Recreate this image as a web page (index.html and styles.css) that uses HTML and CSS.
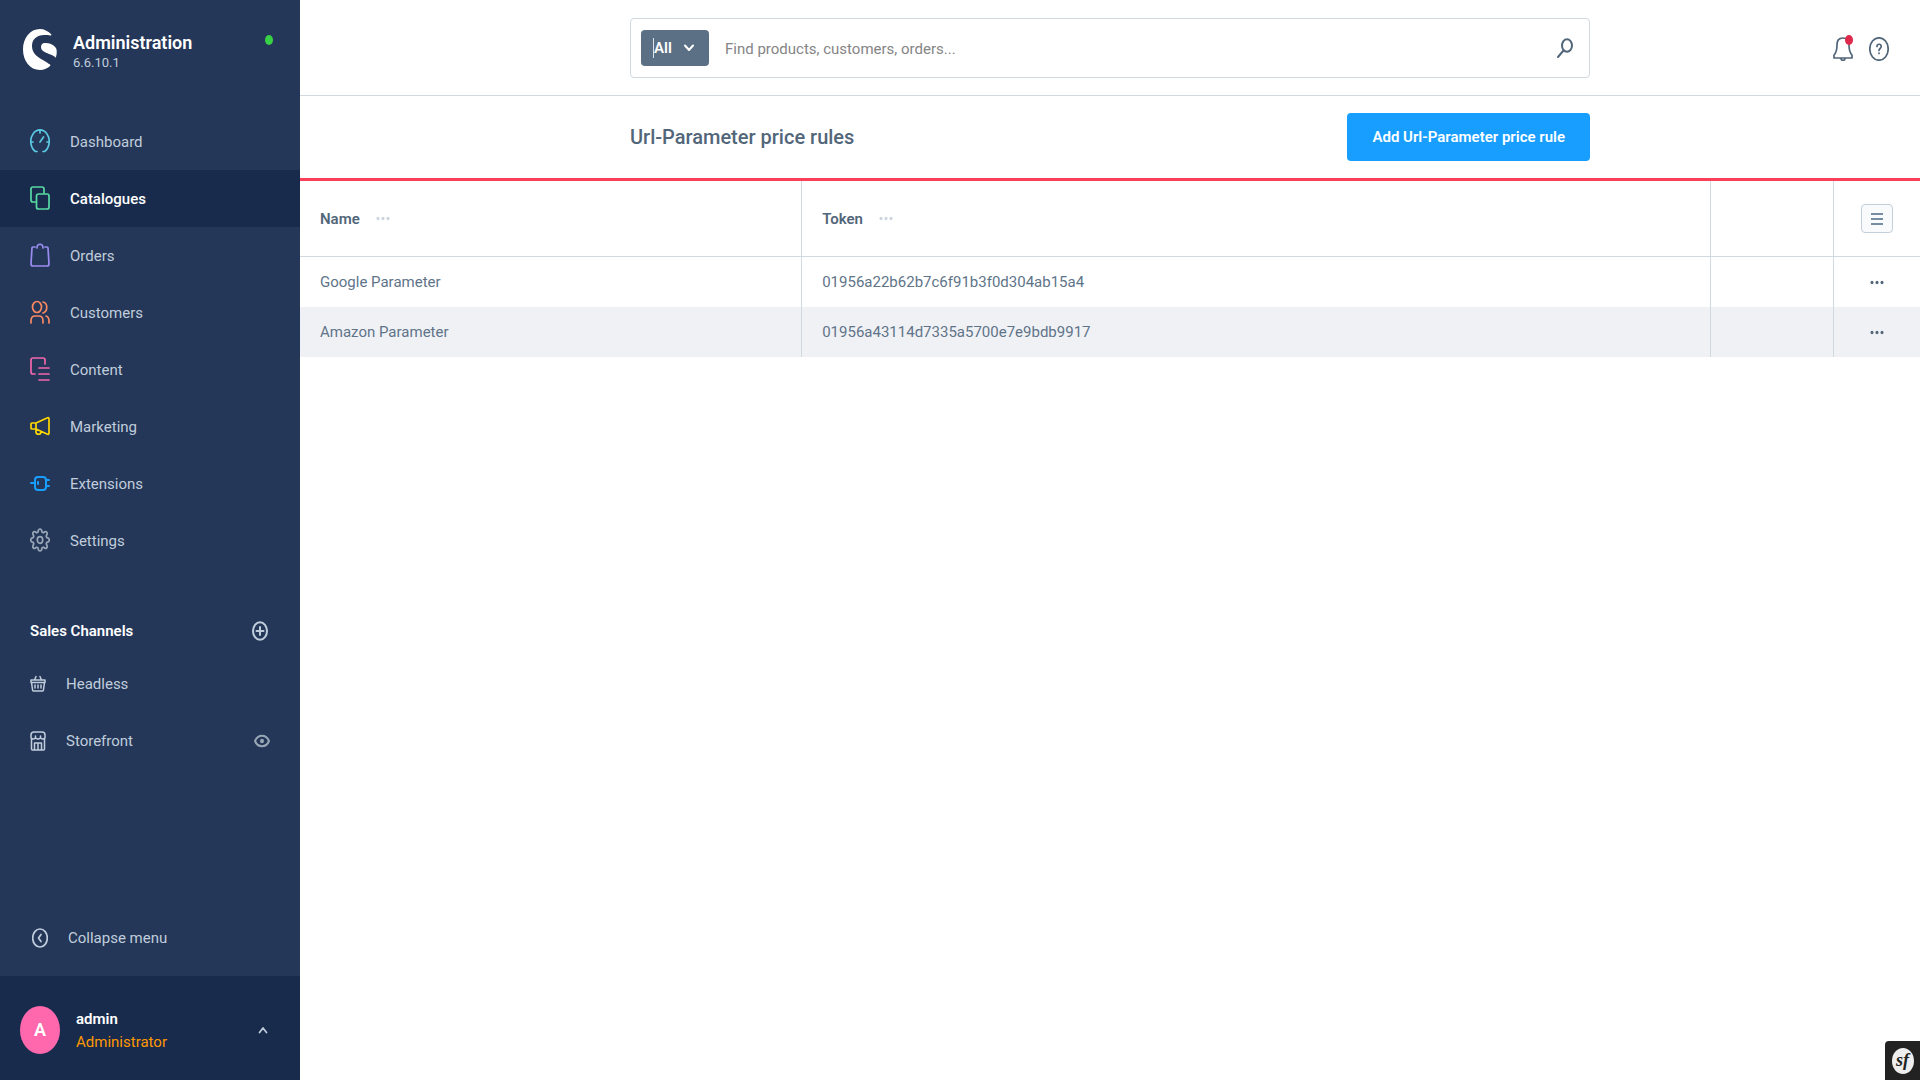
FILE: index.html
```html
<!DOCTYPE html>
<html lang="en">
<head>
<meta charset="utf-8">
<meta name="viewport" content="width=device-width, initial-scale=1">
<title>Url-Parameter price rules | Administration</title>
<link rel="stylesheet" href="styles.css">
</head>
<body>
<div class="app">
  <aside class="sidebar">
    <header class="brand">
      <svg class="brand-logo" viewBox="0 0 34 41" aria-hidden="true">
        <path fill="#fff" d="M28 5C25 2 21 0 17 0 7 0 0 9 0 20.500S7 41 17 41c4 0 8-2 10-4 1-1 0-2-1-2-2-2-5-3-8-5-5-3-9-7-9-13C9 10 14 6 21 6c3 0 5 0 6 .5 1 0 2-.5 1-1.500z"/>
        <path fill="#fff" d="M33 28c1-3 1-7 0-9-3-4-7-5-11-5-3 0-4 2-4 4 0 4 4 5 8 7 3 1 5 2 6 3q1 1 1 0z"/>
      </svg>
      <div class="brand-text">
        <strong class="brand-name">Administration</strong>
        <span class="brand-version">6.6.10.1</span>
      </div>
      <span class="status-dot"></span>
    </header>

    <nav class="nav" aria-label="Main">
      <a class="nav-item" href="#dashboard">
        <svg class="icon nav-icon dashboard" viewBox="0 0 20 24"><path d="M7 22.500H5.500A9.200 11.500 0 1 1 14.500 22.500H13M10 1v3M1 13h2M17 13h2M10 13l3.500-5"/></svg>
        <span>Dashboard</span></a>
      <a class="nav-item active" href="#catalogues" aria-current="page">
        <svg class="icon nav-icon catalogues" viewBox="0 0 20 24"><path d="M6 16H3q-2 0-2-2V3q0-2 2-2h9q2 0 2 2v4"/><rect x="6.500" y="8" width="12.500" height="15" rx="2"/></svg>
        <span>Catalogues</span></a>
      <a class="nav-item" href="#orders">
        <svg class="icon nav-icon orders" viewBox="0 0 20 24"><path d="M5 4H3Q2 4 2 5L1 21q0 2 2 2h14q2 0 2-2L18 5q0-1-1-1h-2M7 5c0-5 6-5 6 0"/></svg>
        <span>Orders</span></a>
      <a class="nav-item" href="#customers">
        <svg class="icon nav-icon customers" viewBox="0 0 20 24"><ellipse cx="7" cy="7" rx="4.500" ry="5.500"/><path d="M1 23v-2q0-5 4-5h4q4 0 4 5v2M13 2c5 1 5 9 0 11M16 16q3 1 3 5v2"/></svg>
        <span>Customers</span></a>
      <a class="nav-item" href="#content">
        <svg class="icon nav-icon content" viewBox="0 0 20 24"><path d="M5 17H3q-2 0-2-2V3q0-2 2-2h10q2 0 2 2v4M9 11h10M9 17h10M9 23h10"/></svg>
        <span>Content</span></a>
      <a class="nav-item" href="#marketing">
        <svg class="icon nav-icon marketing" viewBox="0 0 20 24"><path d="M6 9l11-5q2-1 2 1v14q0 2-2 1L6 15zM6 9H2q-1 0-1 1v4q0 1 1 1h4M6 15v3c0 3 5 3 5 0"/></svg>
        <span>Marketing</span></a>
      <a class="nav-item" href="#extensions">
        <svg class="icon nav-icon extensions" viewBox="0 0 20 24"><path d="M1 12h4M16 9h3M16 15h3M8 11v2"/><rect x="5" y="6" width="11" height="13" rx="3"/></svg>
        <span>Extensions</span></a>
      <a class="nav-item" href="#settings">
        <svg class="icon nav-icon settings" viewBox="0 0 20 24"><ellipse cx="10" cy="12" rx="2.700" ry="3.300"/><path d="M8.500 2q1.500-2 3 0l.6 2.200 1.300.6 2-1.300q1.800 0 1.800 2.300l-1 2.300.6 1.500 1.800.7q1.200 1.700 0 3.400l-1.800.7-.6 1.500 1 2.300q0 2.300-1.800 2.300l-2-1.300-1.300.6-.6 2.200q-1.500 2-3 0l-.6-2.200-1.300-.6-2 1.300q-1.800 0-1.800-2.300l1-2.300-.6-1.500-1.800-.7q-1.200-1.700 0-3.400l1.800-.7.6-1.500-1-2.300q0-2.300 1.800-2.300l2 1.300 1.300-.6z"/></svg>
        <span>Settings</span></a>
    </nav>

    <section class="channels">
      <div class="channels-head">
        <h2 class="channels-title">Sales Channels</h2>
        <button class="icon-button" type="button" aria-label="Add sales channel">
          <svg class="icon plus-icon" viewBox="0 0 16 20"><ellipse cx="8" cy="10" rx="7" ry="8.800"/><path d="M8 6v8M4.500 10h7"/></svg>
        </button>
      </div>
      <div class="channel">
        <a class="channel-link" href="#headless">
          <svg class="icon small-icon" viewBox="0 0 16 20"><path d="M1 6h14v2.500H1zM1.500 8.500l1 7q0 1.500 1 1.500h9q1 0 1-1.500l1-7M4.500 6L6 2.500M11.500 6L10 2.500M5 11v3M8 11v3M11 11v3"/></svg>
          <span>Headless</span></a>
      </div>
      <div class="channel">
        <a class="channel-link" href="#storefront">
          <svg class="icon small-icon" viewBox="0 0 16 20"><path d="M1.500 8v10q0 1 1 1h11q1 0 1-1V8M1 4q0-3 3-3h8q3 0 3 3v3q-2 2-4.500 0Q8 9 5.500 7 3 9 1 7zM4.500 19v-7h7v7M8 12v7M5.500 5v2M10.500 5v2"/></svg>
          <span>Storefront</span></a>
        <button class="icon-button" type="button" aria-label="Open storefront">
          <svg class="icon eye-icon" viewBox="0 0 16 14"><path d="M1 7C4 0 12 0 15 7 12 14 4 14 1 7z"/><ellipse cx="8" cy="7" rx="1" ry="1.300"/></svg>
        </button>
      </div>
    </section>

    <button class="collapse" type="button">
      <svg class="icon collapse-icon" viewBox="0 0 16 20"><ellipse cx="8" cy="10" rx="7.300" ry="9"/><path d="M9 6.500L6.500 10 9 13.500"/></svg>
      <span>Collapse menu</span>
    </button>

    <button class="user" type="button">
      <span class="avatar">A</span>
      <span class="user-text">
        <strong class="user-name">admin</strong>
        <span class="user-role">Administrator</span>
      </span>
      <svg class="icon user-chevron" viewBox="0 0 10 8"><path d="M1.500 6.500l3.500-4.500 3.500 4.500"/></svg>
    </button>
  </aside>

  <main class="main">
    <header class="topbar">
      <form class="search" role="search">
        <button class="search-type" type="button"><span class="caret"></span><span>All</span>
          <svg class="icon type-chevron" viewBox="0 0 10 8"><path d="M1 1.500l4 4.500 4-4.500"/></svg>
        </button>
        <input class="search-input" type="text" aria-label="Search" placeholder="Find products, customers, orders...">
        <button class="icon-button" type="submit" aria-label="Search">
          <svg class="icon search-icon" viewBox="0 0 16 20"><ellipse cx="10" cy="7.500" rx="5" ry="6.300"/><path d="M6.500 12.500L1 19"/></svg>
        </button>
      </form>
      <div class="top-actions">
        <button class="icon-button bell" type="button" aria-label="Notifications">
          <svg class="icon top-icon" viewBox="0 0 20 24"><path d="M10 1C5 1 4 4 4 8c0 5-1 8-3 10v3h18v-3c-2-2-3-5-3-10 0-4-1-7-6-7zM8 21.500c0 2.500 4 2.500 4 0"/></svg>
          <span class="bell-dot"></span>
        </button>
        <button class="icon-button" type="button" aria-label="Help">
          <svg class="icon top-icon" viewBox="0 0 20 24"><ellipse cx="10" cy="12" rx="9.200" ry="11.200"/><path d="M8 9.500c0-3 4.200-3 4.200 0 0 2-2.200 2-2.200 4M10 16v.5"/></svg>
        </button>
      </div>
    </header>

    <section class="page-head">
      <div class="page-head-inner">
        <h1 class="page-title">Url-Parameter price rules</h1>
        <button class="primary" type="button">Add Url-Parameter price rule</button>
      </div>
    </section>

    <table class="grid">
      <colgroup><col class="col-name"><col><col class="col-empty"><col class="col-actions"></colgroup>
      <thead>
        <tr>
          <th scope="col"><div class="head-cell">Name
            <button class="icon-button" type="button" aria-label="Name column options"><svg class="dots head-dots" viewBox="0 0 14 5"><ellipse cx="2" cy="2.500" rx="1.500" ry="1.800"/><ellipse cx="7" cy="2.500" rx="1.500" ry="1.800"/><ellipse cx="12" cy="2.500" rx="1.500" ry="1.800"/></svg></button></div></th>
          <th scope="col"><div class="head-cell">Token
            <button class="icon-button" type="button" aria-label="Token column options"><svg class="dots head-dots" viewBox="0 0 14 5"><ellipse cx="2" cy="2.500" rx="1.500" ry="1.800"/><ellipse cx="7" cy="2.500" rx="1.500" ry="1.800"/><ellipse cx="12" cy="2.500" rx="1.500" ry="1.800"/></svg></button></div></th>
          <td></td>
          <td class="actions"><button class="list-button" type="button" aria-label="List settings"><svg class="icon list-icon" viewBox="0 0 12 12"><path d="M0 1h12M0 6h12M0 11h12"/></svg></button></td>
        </tr>
      </thead>
      <tbody>
        <tr>
          <td>Google Parameter</td><td>01956a22b62b7c6f91b3f0d304ab15a4</td><td></td>
          <td class="actions"><button class="icon-button" type="button" aria-label="Google Parameter actions"><svg class="dots" viewBox="0 0 14 5"><ellipse cx="2" cy="2.500" rx="1.500" ry="1.800"/><ellipse cx="7" cy="2.500" rx="1.500" ry="1.800"/><ellipse cx="12" cy="2.500" rx="1.500" ry="1.800"/></svg></button></td>
        </tr>
        <tr>
          <td>Amazon Parameter</td><td>01956a43114d7335a5700e7e9bdb9917</td><td></td>
          <td class="actions"><button class="icon-button" type="button" aria-label="Amazon Parameter actions"><svg class="dots" viewBox="0 0 14 5"><ellipse cx="2" cy="2.500" rx="1.500" ry="1.800"/><ellipse cx="7" cy="2.500" rx="1.500" ry="1.800"/><ellipse cx="12" cy="2.500" rx="1.500" ry="1.800"/></svg></button></td>
        </tr>
      </tbody>
    </table>
  </main>

  <button class="toolbar-toggle" type="button" aria-label="Open toolbar"><span class="toolbar-badge">sf</span></button>
</div>
</body>
</html>
```
FILE: styles.css
```css
* { box-sizing: border-box; }

body {
  margin: 0;
  background: #fff;
  color: #607489;
  font: 15px/20px Roboto, "Liberation Sans", sans-serif;
}

button, input { font: inherit; color: inherit; }

button {
  padding: 0;
  border: 0;
  background: none;
  cursor: pointer;
}

a { color: inherit; text-decoration: none; }

.app {
  display: grid;
  grid-template-columns: 300px minmax(0, 1fr);
  min-height: 100vh;
}

.icon {
  flex: none;
  fill: none;
  stroke: currentColor;
  stroke-width: 1.7;
  stroke-linecap: round;
  stroke-linejoin: round;
}

.icon-button { display: flex; align-items: center; }

/* Sidebar */
.sidebar {
  position: sticky;
  top: 0;
  display: flex;
  flex-direction: column;
  height: 100vh;
  background: #243758;
  color: #c0cddc;
}

.brand {
  display: flex;
  gap: 16px;
  height: 113px;
  padding: 29px 27px 0 23px;
}

.brand-logo { width: 34px; height: 41px; }

.brand-text {
  display: flex;
  flex: 1;
  flex-direction: column;
  padding-top: 4px;
}

.brand-name {
  color: #fff;
  font-size: 18px;
  font-weight: 600;
}

.brand-version { font-size: 13px; }

.status-dot {
  width: 8px;
  height: 10px;
  margin-top: 6px;
  border-radius: 50%;
  background: #37d046;
}

.nav-item {
  display: flex;
  align-items: center;
  gap: 20px;
  height: 57px;
  padding: 0 30px;
}

.nav-item.active {
  background: #182b4d;
  color: #fff;
  font-weight: 500;
}

.nav-icon { width: 20px; height: 24px; margin-bottom: 2px; }
.dashboard { color: #5ac8e2; }
.catalogues { color: #57d9a3; }
.orders { color: #9a8cf0; }
.customers { color: #f88962; }
.content { color: #f266ad; }
.marketing { color: #ffd700; }
.extensions { color: #189eff; stroke-width: 2; }
.settings { color: #98a7b5; }

.channels { padding: 30px 30px 0; }

.channels-head, .channel {
  display: flex;
  align-items: center;
  justify-content: space-between;
}

.channels-head { height: 56px; padding-top: 8px; }
.channel { height: 57px; }

.channels-title {
  margin: 0;
  color: #fff;
  font-size: 15px;
  font-weight: 600;
}

.channel-link { display: flex; align-items: center; gap: 20px; }
.plus-icon, .small-icon, .collapse-icon { width: 16px; height: 20px; }
.plus-icon { margin-right: 2px; stroke-width: 2; }
.small-icon { stroke-width: 1.5; }
.eye-icon { width: 16px; height: 14px; color: #98a7b5; stroke-width: 2; }

.collapse {
  display: flex;
  align-items: center;
  gap: 20px;
  margin-top: auto;
  padding: 28px 32px;
}

.user {
  display: flex;
  align-items: center;
  gap: 16px;
  height: 104px;
  padding: 4px 32px 0 20px;
  background: #182b4d;
  text-align: left;
}

.avatar {
  display: grid;
  place-items: center;
  width: 40px;
  height: 48px;
  border-radius: 50%;
  background: #ff68ac;
  color: #fff;
  font-size: 18px;
  font-weight: 600;
}

.user-text { display: flex; flex: 1; flex-direction: column; gap: 3px; }
.user-name { color: #fff; font-weight: 600; }
.user-role { color: #ff9800; }
.user-chevron, .type-chevron { width: 10px; height: 8px; }

/* Top bar */
.topbar {
  display: grid;
  grid-template-columns: 1fr minmax(0, 960px) 1fr;
  align-items: center;
  height: 96px;
  border-bottom: 1px solid #d1d9e0;
  color: #52667a;
}

.search {
  display: flex;
  grid-column: 2;
  align-items: center;
  gap: 16px;
  height: 60px;
  padding: 0 16px 0 10px;
  border: 1px solid #d1d9e0;
  border-radius: 4px;
}

.search-type {
  display: flex;
  align-items: center;
  width: 68px;
  height: 36px;
  padding: 0 15px 0 12px;
  border-radius: 4px;
  background: #5c7085;
  color: #fff;
  font-weight: 600;
}

.caret { width: 1px; height: 20px; background: #dbe2ea; }
.type-chevron { margin-left: auto; stroke-width: 2; }

.search-input {
  flex: 1;
  min-width: 0;
  padding: 2px 0 0;
  border: 0;
  outline: 0;
  background: none;
}

.search-input::placeholder { color: #858585; opacity: 1; }
.search-icon { width: 16px; height: 20px; stroke-width: 2; }

.top-actions {
  display: flex;
  gap: 16px;
  justify-self: end;
  padding: 2px 31px 0 0;
}

.top-icon { width: 20px; height: 24px; }
.bell { position: relative; }

.bell-dot {
  position: absolute;
  top: -2px;
  right: 0;
  width: 8px;
  height: 10px;
  border-radius: 50%;
  background: #de294c;
}

/* Page header */
.page-head {
  display: grid;
  grid-template-columns: minmax(0, 960px);
  justify-content: center;
  height: 85px;
  border-bottom: 3px solid #f93f5a;
}

.page-head-inner {
  display: flex;
  align-items: center;
  justify-content: space-between;
}

.page-title {
  margin: 0;
  color: #52667a;
  font-size: 20px;
  font-weight: 500;
  line-height: 24px;
}

.primary {
  height: 48px;
  padding: 0 25px;
  border-radius: 4px;
  background: #189eff;
  color: #fff;
  font-weight: 600;
}

/* Data grid */
.grid {
  width: 100%;
  border-collapse: separate;
  border-spacing: 0;
  table-layout: fixed;
}

.col-name { width: 31%; }
.col-empty { width: 123px; }
.col-actions { width: 86px; }

.grid th, .grid td {
  height: 50px;
  padding: 0 20px;
  border-right: 1px solid #d1d9e0;
  text-align: left;
}

.grid th:last-child, .grid td:last-child { border-right: 0; }

.grid thead th, .grid thead td {
  height: 76px;
  border-bottom: 1px solid #d1d9e0;
  color: #52667a;
  font-weight: 600;
}

.grid tbody tr:nth-child(even) { background: #f0f1f5; }
.head-cell { display: flex; align-items: center; gap: 16px; }

.dots { width: 14px; height: 5px; fill: #52667a; }
.head-dots { fill: #cbd4dd; }
.actions .icon-button, .list-button { margin: 0 auto; }

.list-button {
  display: grid;
  place-items: center;
  width: 32px;
  height: 29px;
  border: 1px solid #c3cfda;
  border-radius: 4px;
  background: #f9fafb;
  color: #758ca3;
}

.list-icon { width: 12px; height: 12px; stroke-width: 2; stroke-linecap: butt; }

/* Debug toolbar toggle, floating over the page corner */
.toolbar-toggle {
  position: fixed;
  right: 0;
  bottom: 0;
  display: grid;
  place-items: center;
  width: 35px;
  height: 39px;
  border-radius: 4px 0 0 0;
  background: #222;
}

.toolbar-badge {
  width: 22px;
  height: 26px;
  border-radius: 50%;
  background: #eee;
  color: #222;
  font: italic bold 18px/24px "Liberation Serif", serif;
  text-align: center;
}
```
